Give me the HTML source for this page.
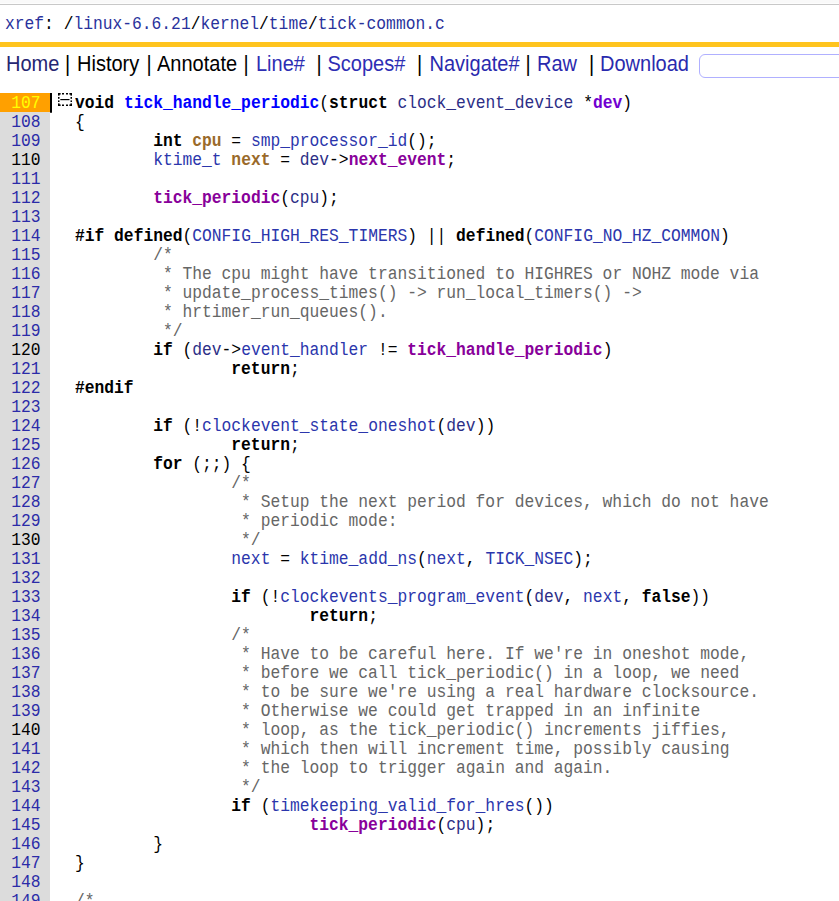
<!DOCTYPE html>
<html><head><meta charset="utf-8"><style>
html,body{margin:0;padding:0;background:#fff;width:839px;height:901px;overflow:hidden;position:relative}
body{font-family:"Liberation Mono",monospace}
#tb{position:absolute;left:0;top:0;width:839px;height:3px;background:#f9f9f9;border-bottom:1px solid #fdfdfd}
#tb2{position:absolute;left:0;top:4px;width:839px;height:1px;background:#c8c8c8}
#path{position:absolute;left:5px;top:15px;font-size:16.3px;line-height:19px;white-space:pre;color:#000;transform:scaleY(1.10);transform-origin:0 14px}
#path .p{color:#29329c}
#yb{position:absolute;left:0;top:42px;width:839px;height:5px;background:#ffc41e}
.nav{position:absolute;top:53px;font-family:"Liberation Sans",sans-serif;font-size:20px;line-height:23px;white-space:pre;transform:scaleY(1.07);transform-origin:0 18px}
.nv{color:#2a2aae}
.nh{color:#262672}
.nb{color:#000}
.nl{color:#2e2eb4}
#srch{position:absolute;left:699px;top:54px;width:160px;height:22px;border:1px solid #b0b0ff;border-radius:6px;background:#fff}
.sy{display:inline-block;transform:scaleY(1.10);transform-origin:0 13.7px}
#gutter{position:absolute;left:0;top:93px;width:50px;height:808px;background:#dcdcdc}
.ln{position:absolute;left:0;width:50px;box-sizing:border-box;padding-right:9.5px;padding-top:1px;text-align:right;height:19px;font-size:16.3px;line-height:19px;color:#2b2ba8;white-space:pre}
.ln.hl{color:#000}
.ln.cur{background:#ffa000;color:#ffff00}
.curb{position:absolute;left:50px;top:93px;width:2px;height:19.5px;background:#000;border-radius:0 0 1px 1px}
.cl{position:absolute;left:75px;height:19px;padding-top:1px;transform:scaleY(1.10);transform-origin:0 14.7px;font-size:16.3px;line-height:19px;white-space:pre;color:#000}
.k{font-weight:bold;color:#000}
.d{font-weight:bold;color:#0000ff}
.a{font-weight:bold;color:#7000d0}
.t{color:#2b36ac}
.td{color:#2c2e86}
.lv{font-weight:bold;color:#9a6a2a}
.f{font-weight:bold;color:#88009a}
.c{color:#666}
#fold{position:absolute;left:0;top:0}
</style></head>
<body>
<div id="tb"></div><div id="tb2"></div>
<div id="path"><span class="p">xref</span>: /<span class="p">linux-6.6.21</span>/<span class="p">kernel</span>/<span class="p">time</span>/<span class="p">tick-common.c</span></div>
<div id="yb"></div>
<div class="nav nh" style="left:6px">Home</div><div class="nav nb" style="left:65px">|</div><div class="nav nb" style="left:77px">History</div><div class="nav nb" style="left:146.5px">|</div><div class="nav nb" style="left:157px">Annotate</div><div class="nav nb" style="left:243.5px">|</div><div class="nav nl" style="left:256px">Line#</div><div class="nav nb" style="left:316.5px">|</div><div class="nav nl" style="left:327.5px">Scopes#</div><div class="nav nb" style="left:417px">|</div><div class="nav nv" style="left:429.5px">Navigate#</div><div class="nav nb" style="left:525.5px">|</div><div class="nav nv" style="left:537px">Raw</div><div class="nav nb" style="left:589px">|</div><div class="nav nv" style="left:600px">Download</div>
<div id="srch"></div>
<div id="gutter"></div>
<div class="ln cur" style="top:93px"><span class="sy">107</span></div><div class="cl" style="top:93px"><span class="k">void</span> <span class="d">tick_handle_periodic</span>(<span class="k">struct</span> <span class="td">clock_event_device</span> *<span class="a">dev</span>)</div><div class="ln" style="top:112px"><span class="sy">108</span></div><div class="cl" style="top:112px">{</div><div class="ln" style="top:131px"><span class="sy">109</span></div><div class="cl" style="top:131px">        <span class="k">int</span> <span class="lv">cpu</span> = <span class="t">smp_processor_id</span>();</div><div class="ln hl" style="top:150px"><span class="sy">110</span></div><div class="cl" style="top:150px">        <span class="t">ktime_t</span> <span class="lv">next</span> = <span class="td">dev</span>-&gt;<span class="f">next_event</span>;</div><div class="ln" style="top:169px"><span class="sy">111</span></div><div class="cl" style="top:169px"></div><div class="ln" style="top:188px"><span class="sy">112</span></div><div class="cl" style="top:188px">        <span class="f">tick_periodic</span>(<span class="td">cpu</span>);</div><div class="ln" style="top:207px"><span class="sy">113</span></div><div class="cl" style="top:207px"></div><div class="ln" style="top:226px"><span class="sy">114</span></div><div class="cl" style="top:226px"><span class="k">#if</span> <span class="k">defined</span>(<span class="t">CONFIG_HIGH_RES_TIMERS</span>) || <span class="k">defined</span>(<span class="t">CONFIG_NO_HZ_COMMON</span>)</div><div class="ln" style="top:245px"><span class="sy">115</span></div><div class="cl" style="top:245px">        <span class="c">/*</span></div><div class="ln" style="top:264px"><span class="sy">116</span></div><div class="cl" style="top:264px">        <span class="c"> * The cpu might have transitioned to HIGHRES or NOHZ mode via</span></div><div class="ln" style="top:283px"><span class="sy">117</span></div><div class="cl" style="top:283px">        <span class="c"> * update_process_times() -&gt; run_local_timers() -&gt;</span></div><div class="ln" style="top:302px"><span class="sy">118</span></div><div class="cl" style="top:302px">        <span class="c"> * hrtimer_run_queues().</span></div><div class="ln" style="top:321px"><span class="sy">119</span></div><div class="cl" style="top:321px">        <span class="c"> */</span></div><div class="ln hl" style="top:340px"><span class="sy">120</span></div><div class="cl" style="top:340px">        <span class="k">if</span> (<span class="td">dev</span>-&gt;<span class="t">event_handler</span> != <span class="f">tick_handle_periodic</span>)</div><div class="ln" style="top:359px"><span class="sy">121</span></div><div class="cl" style="top:359px">                <span class="k">return</span>;</div><div class="ln" style="top:378px"><span class="sy">122</span></div><div class="cl" style="top:378px"><span class="k">#endif</span></div><div class="ln" style="top:397px"><span class="sy">123</span></div><div class="cl" style="top:397px"></div><div class="ln" style="top:416px"><span class="sy">124</span></div><div class="cl" style="top:416px">        <span class="k">if</span> (!<span class="t">clockevent_state_oneshot</span>(<span class="td">dev</span>))</div><div class="ln" style="top:435px"><span class="sy">125</span></div><div class="cl" style="top:435px">                <span class="k">return</span>;</div><div class="ln" style="top:454px"><span class="sy">126</span></div><div class="cl" style="top:454px">        <span class="k">for</span> (;;) {</div><div class="ln" style="top:473px"><span class="sy">127</span></div><div class="cl" style="top:473px">                <span class="c">/*</span></div><div class="ln" style="top:492px"><span class="sy">128</span></div><div class="cl" style="top:492px">                <span class="c"> * Setup the next period for devices, which do not have</span></div><div class="ln" style="top:511px"><span class="sy">129</span></div><div class="cl" style="top:511px">                <span class="c"> * periodic mode:</span></div><div class="ln hl" style="top:530px"><span class="sy">130</span></div><div class="cl" style="top:530px">                <span class="c"> */</span></div><div class="ln" style="top:549px"><span class="sy">131</span></div><div class="cl" style="top:549px">                <span class="t">next</span> = <span class="t">ktime_add_ns</span>(<span class="t">next</span>, <span class="t">TICK_NSEC</span>);</div><div class="ln" style="top:568px"><span class="sy">132</span></div><div class="cl" style="top:568px"></div><div class="ln" style="top:587px"><span class="sy">133</span></div><div class="cl" style="top:587px">                <span class="k">if</span> (!<span class="t">clockevents_program_event</span>(<span class="td">dev</span>, <span class="t">next</span>, <span class="k">false</span>))</div><div class="ln" style="top:606px"><span class="sy">134</span></div><div class="cl" style="top:606px">                        <span class="k">return</span>;</div><div class="ln" style="top:625px"><span class="sy">135</span></div><div class="cl" style="top:625px">                <span class="c">/*</span></div><div class="ln" style="top:644px"><span class="sy">136</span></div><div class="cl" style="top:644px">                <span class="c"> * Have to be careful here. If we&#x27;re in oneshot mode,</span></div><div class="ln" style="top:663px"><span class="sy">137</span></div><div class="cl" style="top:663px">                <span class="c"> * before we call tick_periodic() in a loop, we need</span></div><div class="ln" style="top:682px"><span class="sy">138</span></div><div class="cl" style="top:682px">                <span class="c"> * to be sure we&#x27;re using a real hardware clocksource.</span></div><div class="ln" style="top:701px"><span class="sy">139</span></div><div class="cl" style="top:701px">                <span class="c"> * Otherwise we could get trapped in an infinite</span></div><div class="ln hl" style="top:720px"><span class="sy">140</span></div><div class="cl" style="top:720px">                <span class="c"> * loop, as the tick_periodic() increments jiffies,</span></div><div class="ln" style="top:739px"><span class="sy">141</span></div><div class="cl" style="top:739px">                <span class="c"> * which then will increment time, possibly causing</span></div><div class="ln" style="top:758px"><span class="sy">142</span></div><div class="cl" style="top:758px">                <span class="c"> * the loop to trigger again and again.</span></div><div class="ln" style="top:777px"><span class="sy">143</span></div><div class="cl" style="top:777px">                <span class="c"> */</span></div><div class="ln" style="top:796px"><span class="sy">144</span></div><div class="cl" style="top:796px">                <span class="k">if</span> (<span class="t">timekeeping_valid_for_hres</span>())</div><div class="ln" style="top:815px"><span class="sy">145</span></div><div class="cl" style="top:815px">                        <span class="f">tick_periodic</span>(<span class="td">cpu</span>);</div><div class="ln" style="top:834px"><span class="sy">146</span></div><div class="cl" style="top:834px">        }</div><div class="ln" style="top:853px"><span class="sy">147</span></div><div class="cl" style="top:853px">}</div><div class="ln" style="top:872px"><span class="sy">148</span></div><div class="cl" style="top:872px"></div><div class="ln" style="top:891px"><span class="sy">149</span></div><div class="cl" style="top:891px"><span class="c">/*</span></div>
<div class="curb"></div>
<svg id="fold" width="80" height="120" viewBox="0 0 80 120">
<g fill="#000">
<rect x="58" y="93" width="2.6" height="1.6"/><rect x="58" y="93" width="1.6" height="2.6"/>
<rect x="69.4" y="93" width="2.6" height="1.6"/><rect x="70.4" y="93" width="1.6" height="2.6"/>
<rect x="58" y="104.4" width="2.6" height="1.6"/><rect x="58" y="103.4" width="1.6" height="2.6"/>
<rect x="69.4" y="104.4" width="2.6" height="1.6"/><rect x="70.4" y="103.4" width="1.6" height="2.6"/>
<rect x="62" y="93" width="2" height="1.5"/><rect x="66" y="93" width="2" height="1.5"/>
<rect x="62" y="104.5" width="2" height="1.5"/><rect x="66" y="104.5" width="2" height="1.5"/>
<rect x="58" y="97" width="1.5" height="1.8"/><rect x="58" y="100.4" width="1.5" height="1.6"/>
<rect x="70.5" y="97" width="1.5" height="1.8"/><rect x="70.5" y="100.4" width="1.5" height="1.6"/>
<rect x="60.3" y="99" width="9.2" height="1.2"/>
</g></svg>
</body></html>
